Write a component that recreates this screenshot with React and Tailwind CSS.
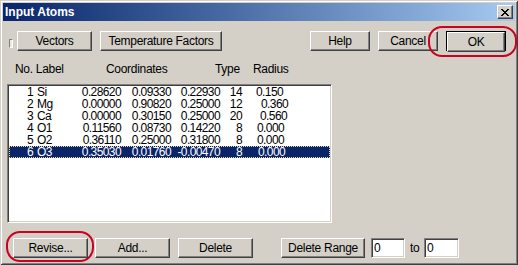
import React from "react";

const BTN =
  "flex items-center justify-center h-[20px] bg-[#d4d0c8] border border-t-white border-l-white border-r-[#404040] border-b-[#404040] shadow-[inset_-1px_-1px_0_#808080,inset_1px_1px_0_#d4d0c8] text-black";

const SUNKEN =
  "bg-white border border-t-[#808080] border-l-[#808080] border-r-white border-b-white shadow-[inset_1px_1px_0_#404040,inset_-1px_-1px_0_#d4d0c8] p-[1px]";

const rows = [
  { n: "1", l: "Si", c: ["0.28620", "0.09330", "0.22930"], t: "14", r: "0.150", rx: 256 },
  { n: "2", l: "Mg", c: ["0.00000", "0.90820", "0.25000"], t: "12", r: "0.360", rx: 261 },
  { n: "3", l: "Ca", c: ["0.00000", "0.30150", "0.25000"], t: "20", r: "0.560", rx: 260 },
  { n: "4", l: "O1", c: ["0.11560", "0.08730", "0.14220"], t: "8", r: "0.000", rx: 257 },
  { n: "5", l: "O2", c: ["0.36110", "0.25000", "0.31800"], t: "8", r: "0.000", rx: 257 },
  { n: "6", l: "O3", c: ["0.35030", "0.01760", "-0.00470"], t: "8", r: "0.000", rx: 258, sel: true },
];

function Row({ row }) {
  return (
    <div
      className={
        "flex h-[12px] items-center leading-[12px] tracking-[-0.6px] whitespace-nowrap " +
        (row.sel
          ? "bg-[#0a246a] text-white outline-1 outline-dotted outline-[#f5db95] -outline-offset-1"
          : "text-black")
      }
    >
      <span className="w-[24px] text-right">{row.n}</span>
      <span className="w-[38px] pl-[4px]">{row.l}</span>
      <span className="w-[50px] text-right">{row.c[0]}</span>
      <span className="w-[50px] text-right">{row.c[1]}</span>
      <span className="w-[49px] text-right">{row.c[2]}</span>
      <span className="w-[22px] text-right">{row.t}</span>
      <span style={{ paddingLeft: row.rx - 242 }}>{row.r}</span>
    </div>
  );
}

function CloseGlyph() {
  const px = [
    [0, 0], [1, 0], [6, 0], [7, 0],
    [1, 1], [2, 1], [5, 1], [6, 1],
    [2, 2], [3, 2], [4, 2], [5, 2],
    [3, 3], [4, 3],
    [2, 4], [3, 4], [4, 4], [5, 4],
    [1, 5], [2, 5], [5, 5], [6, 5],
    [0, 6], [1, 6], [6, 6], [7, 6],
  ];
  return (
    <svg width="8" height="7" viewBox="0 0 8 7" shapeRendering="crispEdges">
      {px.map(([x, y], i) => (
        <rect key={i} x={x} y={y} width="1" height="1" fill="#000" />
      ))}
    </svg>
  );
}

export default function App() {
  return (
    <div className="relative w-[518px] h-[265px] overflow-hidden bg-[#d4d0c8] p-[3px] flex flex-col font-['Liberation_Sans',Arial,sans-serif] text-[12px] tracking-[-0.3px] text-black shadow-[inset_1px_1px_0_#d4d0c8,inset_-1px_-1px_0_#404040,inset_2px_2px_0_#ffffff,inset_-2px_-2px_0_#808080]">
      {/* Title bar */}
      <div className="flex h-[18px] shrink-0 items-center bg-linear-to-r from-[#0a246a] to-[#a6caf0] pl-[2px] pr-[2px]">
        <span className="flex-1 text-[12px] font-bold leading-[18px] text-white tracking-[0px]">
          Input Atoms
        </span>
        <div className="flex h-[14px] w-[16px] items-center justify-center bg-[#d4d0c8] border border-t-white border-l-white border-r-[#404040] border-b-[#404040] shadow-[inset_-1px_-1px_0_#808080,inset_1px_1px_0_#d4d0c8]">
          <CloseGlyph />
        </div>
      </div>

      {/* Top buttons */}
      <div className="mt-[10px] flex items-start">
        <div className="ml-[6px] mt-[8px] h-[9px] w-[4px] bg-[#ebe9e4] border border-t-[#808080] border-l-[#808080] border-r-white border-b-white" />
        <div className={BTN + " ml-[4px] w-[75px]"}>Vectors</div>
        <div className={BTN + " ml-[8px] w-[122px]"}>Temperature Factors</div>
        <div className={BTN + " ml-[88px] w-[60px]"}>Help</div>
        <div className={BTN + " ml-[8px] w-[60px]"}>Cancel</div>
        <div className="ml-[8px] flex h-[20px] w-[60px] border border-black">
          <div className={BTN + " h-[18px] flex-1"}>OK</div>
        </div>
      </div>

      {/* Header */}
      <div className="mt-[12px] flex h-[13px] items-center leading-[13px] whitespace-nowrap">
        <span className="ml-[12px] w-[91px]">No. Label</span>
        <span className="w-[109px]">Coordinates</span>
        <span className="w-[38px]">Type</span>
        <span>Radius</span>
      </div>

      {/* List box */}
      <div className={SUNKEN + " ml-[4px] mt-[8px] h-[139px] w-[325px] shrink-0"}>
        {rows.map((r) => (
          <Row key={r.n} row={r} />
        ))}
      </div>

      {/* Bottom row */}
      <div className="mt-[15px] flex items-center">
        <div className={BTN + " ml-[10px] w-[75px]"}>Revise...</div>
        <div className={BTN + " ml-[7px] w-[75px]"}>Add...</div>
        <div className={BTN + " ml-[8px] w-[75px]"}>Delete</div>
        <div className={BTN + " ml-[28px] w-[84px]"}>Delete Range</div>
        <div className={SUNKEN + " ml-[6px] flex h-[20px] w-[34px] items-center pl-[2px]"}>0</div>
        <span className="ml-[5px] w-[10px]">to</span>
        <div className={SUNKEN + " ml-[4px] flex h-[20px] w-[35px] items-center pl-[2px]"}>0</div>
      </div>

      {/* Red annotations */}
      <div className="pointer-events-none absolute left-[428px] top-[26px] h-[31px] w-[89px] rounded-[14px] border-2 border-[#cc0020]" />
      <div className="pointer-events-none absolute left-[6px] top-[231px] h-[31px] w-[88px] rounded-[14px] border-2 border-[#cc0020]" />
    </div>
  );
}
